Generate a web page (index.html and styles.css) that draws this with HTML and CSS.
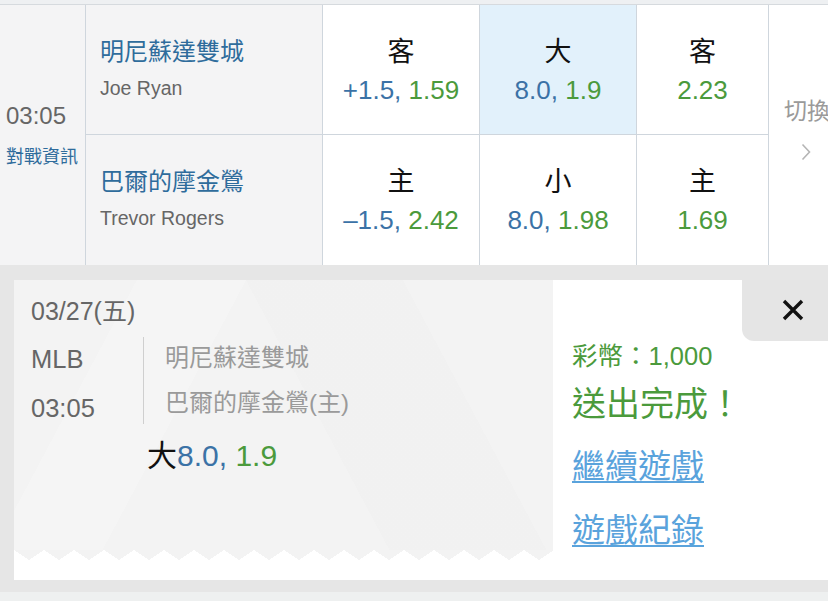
FILE: index.html
```html
<!DOCTYPE html>
<html lang="zh-Hant">
<head>
<meta charset="utf-8">
<title>投注</title>
<link rel="stylesheet" href="styles.css">
</head>
<body>
<div class="page">
  <div class="top-strip"></div>
  <div class="board">
    <div class="cell time-cell">
      <div class="time">03:05</div>
      <div class="info">對戰資訊</div>
    </div>
    <div class="cell team-cell row1">
      <div class="team-name">明尼蘇達雙城</div>
      <div class="pitcher">Joe Ryan</div>
    </div>
    <div class="cell odds-cell row1">
      <div class="odds-label">客</div>
      <div class="odds-val"><span class="blue">+1.5,</span> <span class="green">1.59</span></div>
    </div>
    <div class="cell odds-cell row1 selected">
      <div class="odds-label">大</div>
      <div class="odds-val"><span class="blue">8.0,</span> <span class="green">1.9</span></div>
    </div>
    <div class="cell odds-cell row1">
      <div class="odds-label">客</div>
      <div class="odds-val"><span class="green">2.23</span></div>
    </div>
    <div class="cell switch-cell">
      <div class="switch-text">切換</div>
      <svg class="chevron" width="10" height="18" viewBox="0 0 10 18"><path d="M1.5 1.5 L8.5 9 L1.5 16.5" fill="none" stroke="#b5b5b5" stroke-width="1.6"/></svg>
    </div>
    <div class="cell team-cell">
      <div class="team-name">巴爾的摩金鶯</div>
      <div class="pitcher">Trevor Rogers</div>
    </div>
    <div class="cell odds-cell">
      <div class="odds-label">主</div>
      <div class="odds-val"><span class="blue">–1.5,</span> <span class="green">2.42</span></div>
    </div>
    <div class="cell odds-cell">
      <div class="odds-label">小</div>
      <div class="odds-val"><span class="blue">8.0,</span> <span class="green">1.98</span></div>
    </div>
    <div class="cell odds-cell">
      <div class="odds-label">主</div>
      <div class="odds-val"><span class="green">1.69</span></div>
    </div>
  </div>

  <div class="panel">
    <div class="card">
      <div class="ticket">
        <div class="ticket-body">
          <div class="date">03/27(五)</div>
          <div class="match">
            <div class="match-left">
              <div class="league">MLB</div>
              <div class="match-time">03:05</div>
            </div>
            <div class="match-right">
              <div class="t-team">明尼蘇達雙城</div>
              <div class="t-team second">巴爾的摩金鶯(主)</div>
            </div>
          </div>
          <div class="pick">大<span class="blue">8.0,</span> <span class="green">1.9</span></div>
        </div>
        <div class="ticket-zig"></div>
        <div class="ticket-foot"></div>
      </div>
      <div class="result">
        <div class="coins">彩幣：1,000</div>
        <div class="done">送出完成！</div>
        <a class="link first" href="#">繼續遊戲</a>
        <a class="link" href="#">遊戲紀錄</a>
      </div>
      <div class="close">
        <svg width="24" height="24" viewBox="0 0 24 24"><path d="M3 3 L21 21 M21 3 L3 21" stroke="#111" stroke-width="3.4" stroke-linecap="butt"/></svg>
      </div>
    </div>
  </div>
  <div class="bottom-strip"></div>
</div>
</body>
</html>
```
FILE: styles.css
```css
* { box-sizing: border-box; }
html, body { margin: 0; padding: 0; }
body {
  width: 828px;
  height: 601px;
  overflow: hidden;
  background: #e6e6e6;
  font-family: "Liberation Sans", "Noto Sans CJK TC", sans-serif;
}
.page { width: 828px; overflow: hidden; }

.top-strip {
  height: 5px;
  background: #eef0f2;
  border-bottom: 1px solid #d6dade;
}

.board {
  display: grid;
  grid-template-columns: 86px 237px 157px 157px 132px 120px;
  grid-template-rows: 130px 130px;
  width: 889px;
  background: #fff;
}
.cell {
  border-right: 1px solid #cfd6dd;
}
.row1 { border-bottom: 1px solid #cfd6dd; }

.time-cell {
  grid-row: 1 / span 2;
  background: #f4f4f5;
  padding: 96px 0 0 6px;
}
.time {
  font-size: 24px;
  line-height: 30px;
  color: #666;
}
.info {
  margin-top: 14px;
  font-size: 18px;
  line-height: 24px;
  color: #2f6c9c;
  white-space: nowrap;
}

.team-cell {
  background: #f4f4f5;
  padding: 29px 0 0 14px;
}
.team-name {
  font-size: 24px;
  line-height: 36px;
  color: #2f6c9c;
}
.pitcher {
  font-size: 19.5px;
  line-height: 36px;
  color: #666;
}

.odds-cell {
  background: #fff;
  padding-top: 29px;
  text-align: center;
}
.odds-cell.selected { background: #e2f1fb; }
.odds-label {
  font-size: 27px;
  line-height: 36px;
  color: #111;
}
.odds-val {
  margin-top: 2px;
  font-size: 26px;
  line-height: 36px;
}
.blue { color: #3b72a6; }
.green { color: #4b9a3c; }

.switch-cell {
  grid-column: 6;
  grid-row: 1 / span 2;
  border-right: none;
  background: #fff;
  padding: 92px 0 0 15px;
}
.switch-text {
  font-size: 23px;
  line-height: 28px;
  color: #9a9a9a;
  white-space: nowrap;
}
.chevron {
  display: block;
  margin: 18px 0 0 17px;
}

.panel {
  height: 327px;
  padding: 15px 0 0 14px;
  background: #e6e6e6;
}
.card {
  position: relative;
  display: flex;
  height: 300px;
  width: 814px;
  background: #fff;
}

.ticket {
  width: 539px;
  display: flex;
  flex-direction: column;
}
.ticket-body {
  height: 270px;
  padding: 16px 0 0 17px;
  background:
    linear-gradient(118deg, rgba(255,255,255,0) 0 18%, rgba(255,255,255,0.18) 18% 34%, rgba(255,255,255,0) 34% 100%),
    linear-gradient(62deg, rgba(0,0,0,0) 0 55%, rgba(0,0,0,0.008) 55% 78%, rgba(0,0,0,0) 78% 100%),
    #f3f3f3;
}
.date {
  font-size: 25px;
  line-height: 30px;
  color: #666;
}
.match {
  display: flex;
  align-items: flex-start;
  margin-top: 11px;
}
.match-left {
  width: 112px;
  font-size: 25.5px;
  color: #666;
}
.league { line-height: 44px; }
.match-time { margin-top: 5px; line-height: 44px; }
.match-right {
  border-left: 1px solid #cfcfcf;
  padding-left: 21px;
  height: 87px;
}
.t-team {
  font-size: 24px;
  line-height: 42px;
  color: #9a9a9a;
  white-space: nowrap;
}
.t-team.second { margin-top: 3px; }
.pick {
  margin: 6px 0 0 116px;
  font-size: 30px;
  line-height: 40px;
  color: #111;
}

.ticket-zig {
  height: 10px;
  background: conic-gradient(from -56.31deg at 50% 100%, #f3f3f3 0 112.62deg, #fff 112.62deg 360deg);
  background-size: 30px 10px;
  background-repeat: repeat-x;
}
.ticket-foot {
  height: 20px;
  background: #fff;
}

.result {
  flex: 1;
  padding: 60px 0 0 19px;
  display: flex;
  flex-direction: column;
  align-items: flex-start;
}
.coins {
  font-size: 25.5px;
  line-height: 32px;
  color: #4b9a3c;
  white-space: nowrap;
}
.done {
  margin-top: 10px;
  font-size: 34px;
  line-height: 44px;
  color: #4b9a3c;
  white-space: nowrap;
}
.link {
  margin-top: 20px;
  font-size: 33px;
  line-height: 44px;
  color: #5aa3dc;
  text-decoration: underline;
  text-decoration-thickness: 2px;
  text-underline-offset: 3px;
  white-space: nowrap;
}
.link.first { margin-top: 19px; }

.close {
  position: absolute;
  top: 0;
  right: 0;
  width: 86px;
  height: 61px;
  background: #e5e5e5;
  border-bottom-left-radius: 12px;
  display: flex;
  align-items: center;
  justify-content: center;
}
.close svg { margin-left: 16px; margin-top: -2px; }

.bottom-strip {
  height: 9px;
  background: #eef0f0;
}
```
